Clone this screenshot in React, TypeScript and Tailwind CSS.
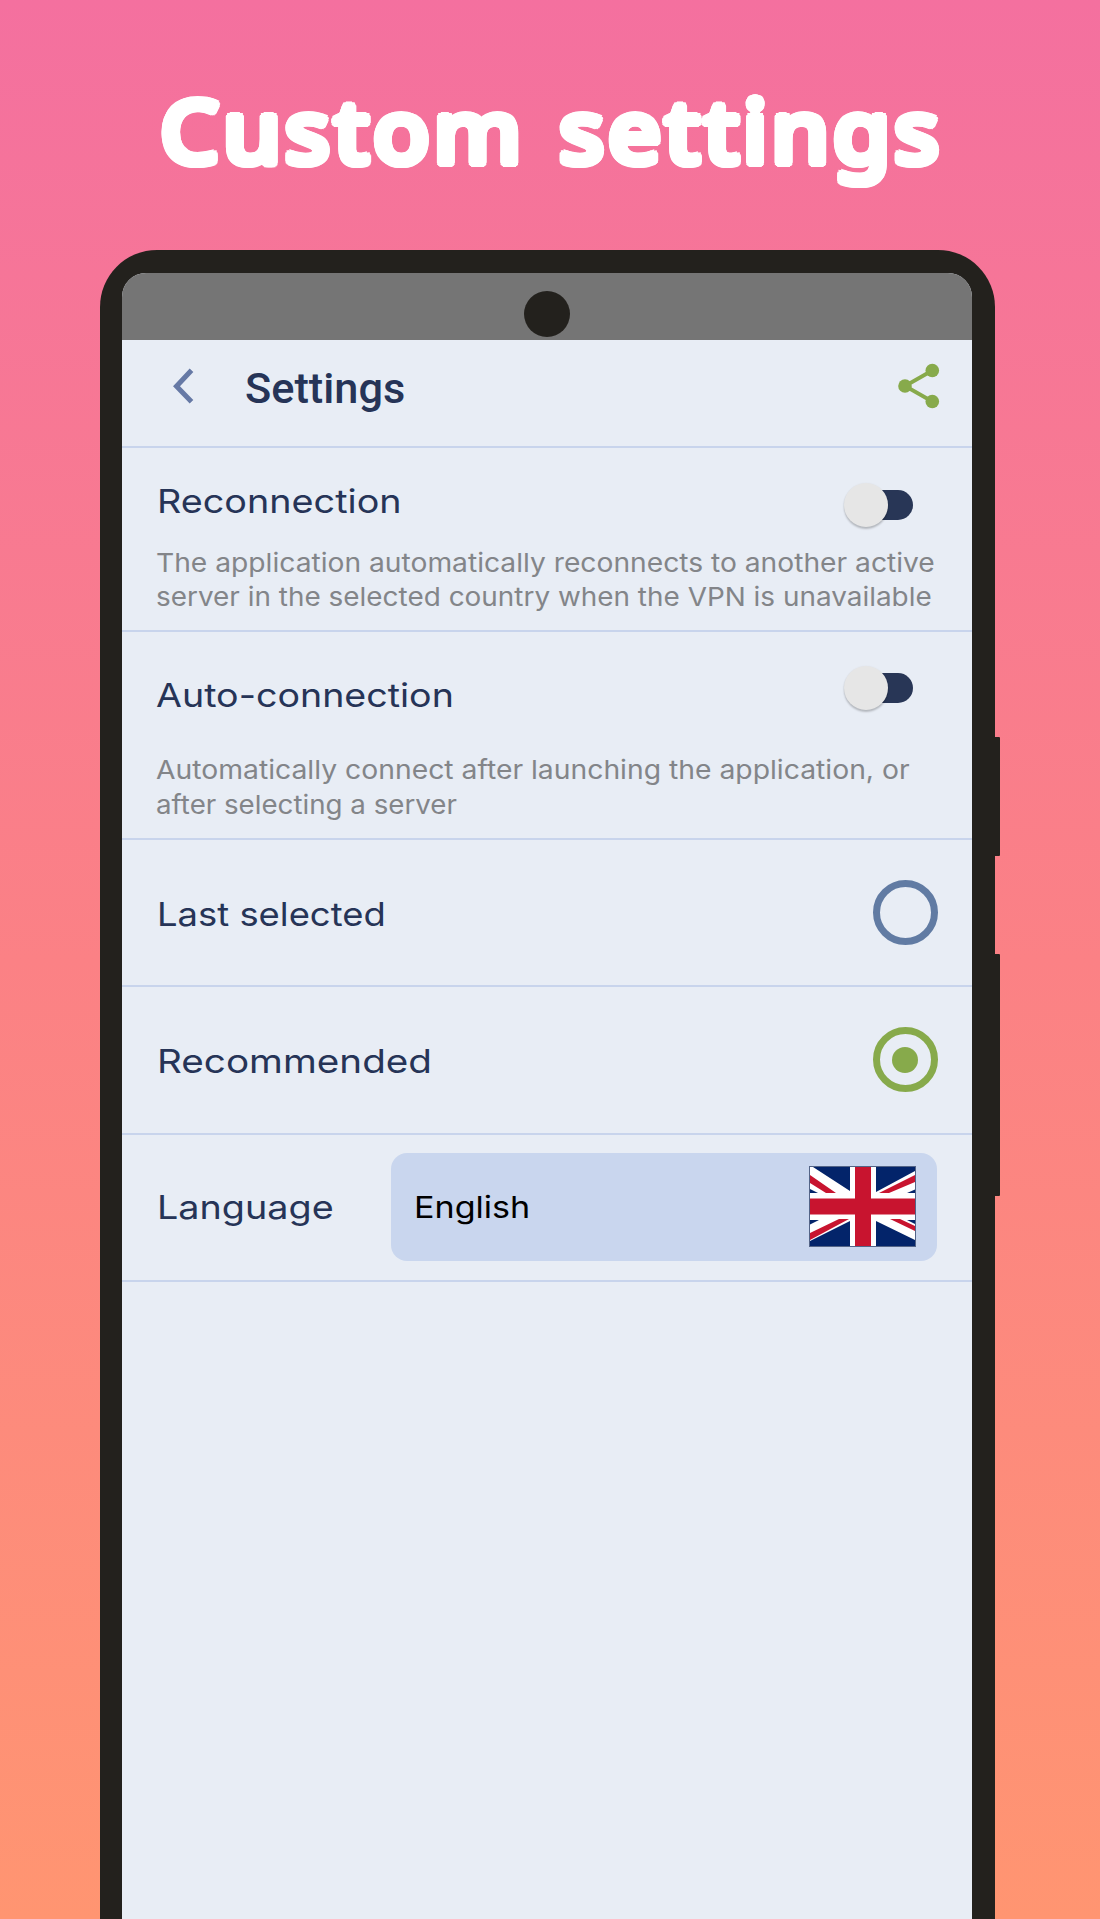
import type { ReactNode } from 'react';

const LABEL = "block h-10 origin-left whitespace-nowrap text-[33px] leading-10 text-[#263457]";
const LINE = "block h-[34px] origin-left whitespace-nowrap text-[26px] leading-[34px] text-[#838589]";

function Toggle() {
  return (
    <span className="flex h-11 w-[69px] items-center" role="switch" aria-checked="false">
      <span className="z-10 size-11 shrink-0 rounded-full bg-[#e6e6e6] shadow-[0_2px_2px_rgba(0,0,0,0.22),0_0_2px_rgba(0,0,0,0.05)]" />
      <span className="-ml-5 h-[30px] w-[45px] shrink-0 rounded-r-full bg-[#283656]" />
    </span>
  );
}

function Radio({ checked = false }: { checked?: boolean }) {
  return checked ? (
    <span className="flex size-[65px] items-center justify-center rounded-full border-[7px] border-[#87aa4b]">
      <span className="size-[26px] rounded-full bg-[#87aa4b]" />
    </span>
  ) : (
    <span className="size-[65px] rounded-full border-[7px] border-[#617ba3]" />
  );
}

function Row({ className, children }: { className: string; children: ReactNode }) {
  return <div className={`border-b-2 border-[#c8d4ec] pl-[35px] ${className}`}>{children}</div>;
}

function UnionJack() {
  return (
    <svg
      className="h-[81px] w-[107px] border border-[#536487] bg-white"
      viewBox="0 0 105 79"
      preserveAspectRatio="none"
    >
      <g fill="#03246a">
        <path d="M3 0H40V24ZM66 0H105V4L66 25ZM40 79H0V74L40 54ZM66 79V54L105 73V79Z" />
        <path d="M0 22 8 26H0ZM105 22.500V26H97ZM0 53H9L0 57.500ZM105 53V57L97 53Z" />
      </g>
      <g fill="#c8142f">
        <path d="M0 8 26 26H16L0 16ZM105 8V15L79 26H69Z" />
        <path d="M0 66 29 52H39L0 73ZM105 64 80 52H90L105 59Z" />
      </g>
      <path d="M45 0H61V31.500H105V47.500H61V79H45V47.500H0V31.500H45Z" fill="#c8142f" />
    </svg>
  );
}

export default function App() {
  return (
    <main className="flex h-[1919px] w-[1100px] flex-col overflow-hidden bg-linear-to-b from-[#f4709f] via-[#fb8185] to-[#ff9571] font-['Inter',sans-serif]">
      <h1 className="flex h-[250px] shrink-0 origin-left scale-x-[1.06] gap-[32px] pt-[59px] pl-[151px] font-['Noto_Sans',sans-serif] text-[88px] leading-[140px] font-medium whitespace-nowrap text-white [text-shadow:3.8px_0_0_#fff,-3.8px_0_0_#fff,0_3.8px_0_#fff,0_-3.8px_0_#fff,2.7px_2.7px_0_#fff,-2.7px_2.7px_0_#fff,2.7px_-2.7px_0_#fff,-2.7px_-2.7px_0_#fff,3.5px_1.5px_0_#fff,-3.5px_1.5px_0_#fff,3.5px_-1.5px_0_#fff,-3.5px_-1.5px_0_#fff,1.5px_3.5px_0_#fff,-1.5px_3.5px_0_#fff,1.5px_-3.5px_0_#fff,-1.5px_-3.5px_0_#fff]">
        <span className="tracking-[3.3px]">Custom</span>
        <span className="tracking-[3.1px]">settings</span>
      </h1>

      <div className="flex grow pl-[100px]">
        <div className="flex w-[895px] flex-col overflow-hidden rounded-t-[57px] bg-[#23211d] pt-[23px] pr-[23px] pl-[22px]">
          <div className="flex grow flex-col overflow-hidden rounded-t-[24px] bg-[#e8edf5]">
            <div className="flex h-[67px] shrink-0 justify-center bg-[#757575] pt-[18px]">
              <span className="size-[46px] rounded-full bg-[#23211d]" />
            </div>

            <header className="flex h-[108px] items-center border-b-2 border-[#c8d4ec] pr-[31px] pb-[9px] pl-[48px]">
              <svg className="mb-[6px] h-[36px] w-[24px]" viewBox="0 0 24 36" fill="none">
                <path d="M21.500 2.300 6.500 18.200 21.500 33.700" stroke="#6679a5" strokeWidth="5" />
              </svg>
              <h2 className="ml-[51px] font-['Roboto',sans-serif] text-[43.300px] leading-[57px] font-medium text-[#263457]">
                Settings
              </h2>
              <svg className="mb-[5px] ml-auto h-[46px] w-[44px]" viewBox="0 0 44 46">
                <path d="M35.300 7.500 8 23 35.300 38.500" fill="none" stroke="#87aa4b" strokeWidth="3.800" />
                <circle cx="35.300" cy="7.500" r="6.800" fill="#87aa4b" />
                <circle cx="8" cy="23" r="6.800" fill="#87aa4b" />
                <circle cx="35.300" cy="38.500" r="6.800" fill="#87aa4b" />
              </svg>
            </header>

            <Row className="h-[184px] shrink-0 pt-[33px]">
              <div className="flex h-10 justify-between pr-[59px]">
                <span className={`${LABEL} scale-x-[1.144]`}>Reconnection</span>
                <span className="mt-[1.5px]"><Toggle /></span>
              </div>
              <p className="-ml-px pt-[25px]">
                <span className={`${LINE} scale-x-[1.0845]`}>The application automatically reconnects to another active</span>
                <span className={`${LINE} scale-x-[1.0735]`}>server in the selected country when the VPN is unavailable</span>
              </p>
            </Row>

            <Row className="h-[208px] shrink-0 pt-[34px]">
              <div className="flex h-[49px] justify-between pr-[59px]">
                <span className={`${LABEL} -ml-px mt-[9px] scale-x-[1.139]`}>Auto-connection</span>
                <Toggle />
              </div>
              <p className="-ml-px pt-[38px]">
                <span className={`${LINE} scale-x-[1.0885]`}>Automatically connect after launching the application, or</span>
                <span className={`${LINE} pt-px scale-x-[1.065]`}>after selecting a server</span>
              </p>
            </Row>

            <Row className="flex h-[147px] shrink-0 items-center justify-between pr-[34.500px]">
              <span className={`${LABEL} mt-[3px] scale-x-[1.103]`}>Last selected</span>
              <Radio />
            </Row>

            <Row className="flex h-[148px] shrink-0 items-center justify-between pr-[34.500px] pb-px">
              <span className={`${LABEL} mt-[3px] scale-x-[1.171]`}>Recommended</span>
              <Radio checked />
            </Row>

            <Row className="flex h-[147px] shrink-0 items-center justify-between pr-[35px] pb-[2px]">
              <span className={`${LABEL} mt-[1px] scale-x-[1.144]`}>Language</span>
              <div className="flex h-[108px] w-[546px] items-center justify-between rounded-2xl bg-[#c9d6ee] pr-[21px] pl-[23px]">
                <span className="origin-left scale-x-[1.137] text-[30px] leading-10 text-black">English</span>
                <UnionJack />
              </div>
            </Row>
          </div>
        </div>

        <div className="w-[5px]">
          <div className="mt-[487px] h-[119px] rounded-r-[1px] bg-[#23211d]" />
          <div className="mt-[98px] h-[242px] rounded-r-[1px] bg-[#23211d]" />
        </div>
      </div>
    </main>
  );
}
